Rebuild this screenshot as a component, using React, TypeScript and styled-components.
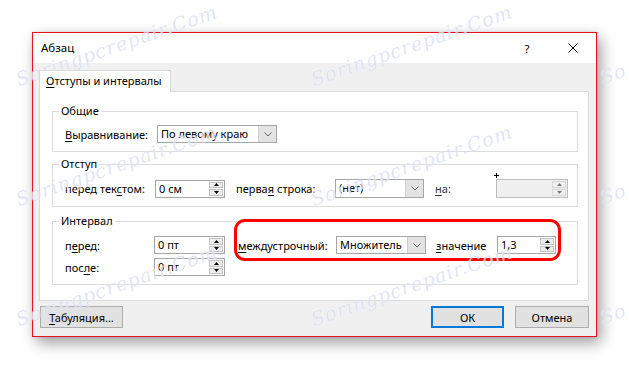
import React from "react";
import styled, { createGlobalStyle } from "styled-components";

const GlobalStyle = createGlobalStyle`
  html, body {
    margin: 0;
    padding: 0;
    background: #fff;
  }
  body {
    font-family: "Noto Sans", "Open Sans", sans-serif;
    font-size: 11px;
    color: #000;
  }
`;

const Page = styled.div`
  position: relative;
  width: 629px;
  height: 368px;
  padding: 32px 0 0 32px;
  box-sizing: border-box;
  overflow: hidden;
`;

const Dialog = styled.div`
  width: 565px;
  height: 305px;
  box-sizing: border-box;
  border: 1px solid #e81123;
  background: #f0f0f0;
  display: flex;
  flex-direction: column;
  box-shadow: 0 0 3px rgba(0, 0, 0, 0.12), 4px 6px 14px rgba(0, 0, 0, 0.38);
`;

const TitleBar = styled.div`
  height: 30px;
  flex: none;
  background: #fff;
  display: flex;
  align-items: center;
  padding-left: 8px;
`;

const Title = styled.div`
  flex: 1;
  font-size: 11.5px;
  line-height: 16px;
`;

const TitleButton = styled.div`
  width: 46px;
  height: 30px;
  display: flex;
  align-items: center;
  justify-content: center;
  font-size: 11.5px;
`;

const Body = styled.div`
  flex: 1;
  display: flex;
  flex-direction: column;
  padding: 7px 7px 8px 6px;
`;

const TabStrip = styled.div`
  display: flex;
`;

const Tab = styled.div`
  position: relative;
  z-index: 1;
  width: 132px;
  height: 22px;
  box-sizing: border-box;
  margin-bottom: -1px;
  padding: 0 0 0 6px;
  border: 1px solid #d9d9d9;
  border-bottom: none;
  background: #fff;
  line-height: 19px;
`;

const Panel = styled.div`
  height: 210px;
  box-sizing: border-box;
  border: 1px solid #d9d9d9;
  background: #fff;
  padding: 11px 10px 0 12px;
  display: flex;
  flex-direction: column;
`;

const Group = styled.fieldset<{ $top?: number }>`
  margin: ${(p) => p.$top ?? 0}px 0 0 0;
  border: 1px solid #dcdcdc;
  padding: 0 8px 8px 12px;
  min-width: 0;
`;

const Legend = styled.legend`
  margin-left: -6px;
  padding: 0 2px;
  line-height: 16px;
`;

const Row = styled.div<{ $h?: number; $top?: number }>`
  display: flex;
  align-items: center;
  height: ${(p) => p.$h ?? 18}px;
  margin-top: ${(p) => p.$top ?? 0}px;
`;

const Label = styled.div<{ $w: number; $ml?: number; $muted?: boolean }>`
  width: ${(p) => p.$w}px;
  margin-left: ${(p) => p.$ml ?? 0}px;
  flex: none;
  white-space: nowrap;
  color: ${(p) => (p.$muted ? "#333" : "#000")};
`;

const Key = styled.span`
  text-decoration: underline;
  text-underline-offset: 2px;
`;

const Select = styled.div<{ $w: number; $h?: number }>`
  width: ${(p) => p.$w}px;
  height: ${(p) => p.$h ?? 18}px;
  box-sizing: border-box;
  border: 1px solid #a6a6a6;
  background: #fff;
  display: flex;
  flex: none;
`;

const SelectValue = styled.div`
  flex: 1;
  padding-left: 3px;
  line-height: 15px;
  white-space: nowrap;
  overflow: hidden;
`;

const DropButton = styled.div`
  width: 17px;
  background: #e3e3e3;
  border-left: 1px solid #cfcfcf;
  display: flex;
  align-items: center;
  justify-content: center;
`;

const Spinner = styled.div<{ $w: number; $h?: number; $disabled?: boolean }>`
  position: relative;
  width: ${(p) => p.$w}px;
  height: ${(p) => p.$h ?? 18}px;
  box-sizing: border-box;
  border: 1px solid ${(p) => (p.$disabled ? "#bdbdbd" : "#a6a6a6")};
  background: ${(p) => (p.$disabled ? "#f0f0f0" : "#fff")};
  display: flex;
  flex: none;
`;

const SpinValue = styled.div`
  flex: 1;
  padding-left: 3px;
  line-height: 15px;
`;

const SpinButtons = styled.div`
  width: 14px;
  margin: 1px 1px 1px 0;
  display: flex;
  flex-direction: column;
  gap: 1px;
`;

const SpinButton = styled.div<{ $disabled?: boolean }>`
  flex: 1;
  background: ${(p) => (p.$disabled ? "#f0f0f0" : "#ececec")};
  border: 1px solid ${(p) => (p.$disabled ? "#d6d6d6" : "#c4c4c4")};
  box-sizing: border-box;
  display: flex;
  align-items: center;
  justify-content: center;
`;

const Cursor = styled.div`
  position: absolute;
  left: -3px;
  top: -7px;
  width: 5px;
  height: 5px;
  &::before,
  &::after {
    content: "";
    position: absolute;
    background: #000;
  }
  &::before {
    left: 2px;
    top: 0;
    width: 1px;
    height: 5px;
  }
  &::after {
    left: 0;
    top: 2px;
    width: 5px;
    height: 1px;
  }
`;

const Highlighted = styled.div`
  position: relative;
  display: flex;
  align-items: center;
  margin-left: 13px;
  &::after {
    content: "";
    position: absolute;
    left: -4px;
    top: -17px;
    width: 327px;
    height: 42px;
    box-sizing: border-box;
    border: 3px solid #ff0000;
    border-radius: 11px;
    pointer-events: none;
  }
`;

const ButtonRow = styled.div`
  display: flex;
  margin-top: 5px;
  padding-left: 1px;
`;

const Button = styled.div<{ $w: number; $primary?: boolean; $ml?: number }>`
  width: ${(p) => p.$w}px;
  height: 22px;
  box-sizing: border-box;
  margin-left: ${(p) => p.$ml ?? 0}px;
  border: ${(p) => (p.$primary ? "2px solid #0078d7" : "1px solid #adadad")};
  background: #e1e1e1;
  display: flex;
  align-items: center;
  justify-content: center;
  flex: none;
`;

const Spacer = styled.div`
  flex: 1;
`;

const WatermarkLayer = styled.div`
  position: absolute;
  inset: 0;
  pointer-events: none;
`;

const Watermark = styled.div`
  position: absolute;
  font-family: "DejaVu Serif", serif;
  font-style: italic;
  font-size: 19px;
  letter-spacing: 1px;
  white-space: nowrap;
  color: rgba(175, 185, 225, 0.38);
  text-shadow: 0 0 1px rgba(255, 255, 255, 0.9);
  transform-origin: 0 100%;
  transform: rotate(-19deg);
`;

const Chevron = ({ color = "#606060" }: { color?: string }) => (
  <svg width="8" height="5" viewBox="0 0 8 5">
    <polyline points="0.5,0.5 4,4 7.5,0.5" fill="none" stroke={color} strokeWidth="1" />
  </svg>
);

const Arrow = ({ up, color = "#000" }: { up?: boolean; color?: string }) => (
  <svg width="5" height="3" viewBox="0 0 5 3">
    <polygon points={up ? "2.5,0 5,3 0,3" : "0,0 5,0 2.5,3"} fill={color} />
  </svg>
);

const Combo: React.FC<{ w: number; h?: number; value: string }> = ({ w, h, value }) => (
  <Select $w={w} $h={h}>
    <SelectValue>{value}</SelectValue>
    <DropButton>
      <Chevron />
    </DropButton>
  </Select>
);

const Spin: React.FC<{ w: number; h?: number; value?: string; disabled?: boolean }> = ({
  w,
  h,
  value = "",
  disabled = false,
}) => (
  <Spinner $w={w} $h={h} $disabled={disabled}>
    {disabled && <Cursor />}
    <SpinValue>{value}</SpinValue>
    <SpinButtons>
      <SpinButton $disabled={disabled}>
        <Arrow up color={disabled ? "#7a7a7a" : "#000"} />
      </SpinButton>
      <SpinButton $disabled={disabled}>
        <Arrow color={disabled ? "#7a7a7a" : "#000"} />
      </SpinButton>
    </SpinButtons>
  </Spinner>
);

// watermark copies: full ones in two columns, a clipped "So" at the right edge
const watermarkSpots = [92, 212, 332].flatMap((y) => [
  { x: 20, y, text: "Soringpcrepair.Com" },
  { x: 315, y, text: "Soringpcrepair.Com" },
  { x: 604, y: y - 2, text: "So" },
]);

export default function App() {
  return (
    <>
      <GlobalStyle />
      <Page>
        <Dialog>
          <TitleBar>
            <Title>Абзац</Title>
            <TitleButton>?</TitleButton>
            <TitleButton>
              <svg width="10" height="10" viewBox="0 0 10 10">
                <path d="M0.5 0.5 L9.5 9.5 M9.5 0.5 L0.5 9.5" stroke="#000" strokeWidth="1" />
              </svg>
            </TitleButton>
          </TitleBar>
          <Body>
            <TabStrip>
              <Tab>
                <Key>О</Key>тступы и интервалы
              </Tab>
            </TabStrip>
            <Panel>
              <Group>
                <Legend>Общие</Legend>
                <Row $top={6}>
                  <Label $w={92}>
                    <Key>В</Key>ыравнивание:
                  </Label>
                  <Combo w={120} value="По левому краю" />
                </Row>
              </Group>

              <Group $top={4}>
                <Legend>Отступ</Legend>
                <Row $top={7} $h={19}>
                  <Label $w={90}>
                    перед тек<Key>с</Key>том:
                  </Label>
                  <Spin w={70} value="0 см" />
                  <Label $w={99} $ml={11}>
                    перва<Key>я</Key> строка:
                  </Label>
                  <Combo w={89} h={19} value="(нет)" />
                  <Label $w={61} $ml={11} $muted>
                    <Key>н</Key>а:
                  </Label>
                  <Spin w={72} h={19} disabled />
                </Row>
              </Group>

              <Group $top={6}>
                <Legend>Интервал</Legend>
                <Row $top={7}>
                  <Label $w={89}>
                    п<Key>е</Key>ред:
                  </Label>
                  <Spin w={71} value="0 пт" />
                  <Highlighted>
                    <Label $w={98}>
                      <Key>м</Key>еждустрочный:
                    </Label>
                    <Combo w={90} value="Множитель" />
                    <Label $w={61} $ml={10}>
                      <Key>з</Key>начение
                    </Label>
                    <Spin w={59} value="1,3" />
                  </Highlighted>
                </Row>
                <Row $top={4}>
                  <Label $w={89}>
                    пос<Key>л</Key>е:
                  </Label>
                  <Spin w={71} value="0 пт" />
                </Row>
              </Group>
            </Panel>
            <ButtonRow>
              <Button $w={83}>
                <span>
                  <Key>Т</Key>абуляция...
                </span>
              </Button>
              <Spacer />
              <Button $w={73} $primary>
                ОК
              </Button>
              <Button $w={74} $ml={11}>
                Отмена
              </Button>
            </ButtonRow>
          </Body>
        </Dialog>
        <WatermarkLayer>
          {watermarkSpots.map((s, i) => (
            <Watermark key={i} style={{ left: s.x, top: s.y - 24 }}>
              {s.text}
            </Watermark>
          ))}
        </WatermarkLayer>
      </Page>
    </>
  );
}
